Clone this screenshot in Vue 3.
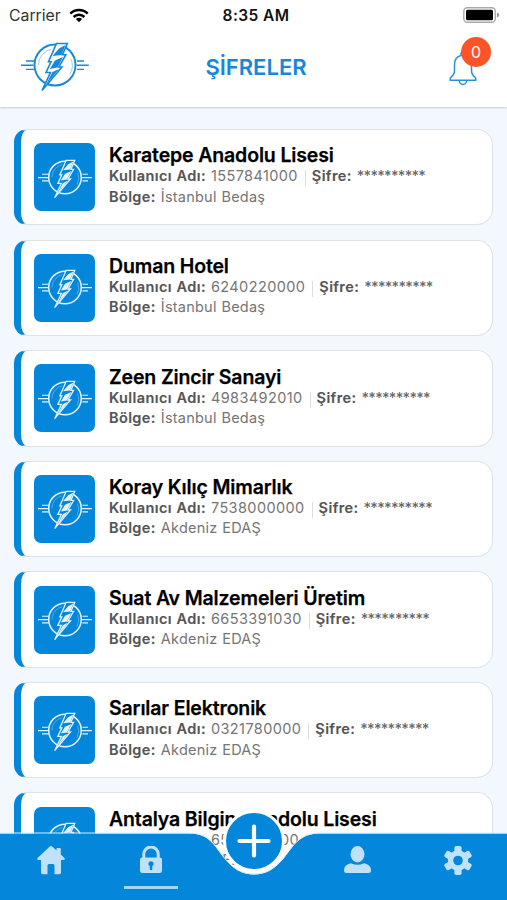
<template>
  <div class="screen">
    <svg class="defs" width="0" height="0">
      <symbol id="bolt-logo" viewBox="21 42 68 50">
        <g fill="none" stroke="currentColor">
          <circle cx="55" cy="65" r="20.500" stroke-width="1.900" />
          <path d="M38.500 65a16.500 16.500 0 0 1 13-16M71 59a17 17 0 0 1-1 15" stroke-width=".7" opacity=".6" />
          <path d="M26 61h8M21 65.200h12.500M26 69.400h8M77 61h7M76.500 65.200h12.300M77 69.400h7" stroke-width="1.400" />
        </g>
        <path class="bolt-back" d="M56.500 43.500H67.300L62.500 54.800H65.800L58.800 67H62L42 90.500L50.500 72.500H46L51 61.800H48.500Z" stroke="currentColor" stroke-width="1.600" />
        <path d="M59 48.500L65.500 45L61.500 55L52.500 56ZM55 60.500L63 57L57.500 67.500L49.800 69ZM52.500 72L59 69L45.500 85.500Z" fill="currentColor" />
      </symbol>
    </svg>

    <div class="status-bar">
      <div class="carrier">
        <span>Carrier</span>
        <svg width="20" height="15" viewBox="0 0 20 15">
          <g fill="none" stroke="#000" stroke-width="2.500">
            <path d="M1.300 5.600a12.300 12.300 0 0 1 17.400 0" />
            <path d="M4.600 9a7.600 7.600 0 0 1 10.800 0" />
          </g>
          <path d="M10 14.200L6.900 11.100a4.400 4.400 0 0 1 6.200 0Z" />
        </svg>
      </div>
      <div class="clock">8:35 AM</div>
      <svg class="battery" width="37" height="16" viewBox="0 0 37 16">
        <rect x=".8" y=".8" width="31.500" height="14.400" rx="3.500" fill="#fff" stroke="#aaa" stroke-width="1.400" />
        <rect x="3" y="2.800" width="27" height="10.400" rx="1.500" />
        <path d="M34 5.500q2.300.6 2.300 2.500t-2.300 2.500Z" fill="#999" />
      </svg>
    </div>

    <header class="header">
      <svg class="logo"><use href="#bolt-logo" /></svg>
      <h1>ŞİFRELER</h1>
      <div class="bell">
        <svg width="28" height="35" viewBox="0 0 28 35" fill="none" stroke="#2590dc" stroke-width="1.500">
          <path d="M12 4.500V3a2 2 0 0 1 4 0V4.500C21 5.500 22.500 9.500 22.500 14V20Q22.500 23.500 26.700 27V29.300H1.300V27Q5.500 23.500 5.500 20V14C5.500 9.500 7 5.500 12 4.500Z" />
          <path d="M10.300 29.500a3.700 4 0 0 0 7.400 0" />
        </svg>
        <span class="badge">0</span>
      </div>
    </header>

    <main class="list">
      <article v-for="item in items" :key="item.user" class="card">
        <div class="tile">
          <svg><use href="#bolt-logo" /></svg>
        </div>
        <div class="info">
          <h2>{{ item.name }}</h2>
          <p>
            <b>Kullanıcı Adı:</b> {{ item.user }}
            <span class="divider"></span>
            <b>Şifre:</b> <span class="stars">**********</span>
          </p>
          <p><b>Bölge:</b> <span class="region">{{ item.region }}</span></p>
        </div>
      </article>
    </main>

    <nav class="tab-bar">
      <svg class="tab-shape" width="507" height="68" viewBox="0 0 507 68">
        <path d="M0 1.500H189C209 1.500 214 13 224 26C233 37 242 42.500 254 42.500S275 37 284 26C294 13 300 1.500 320 1.500H507V68H0Z" fill="#0486db" />
        <path d="M0 1H189C209 1 214 12.500 224 25.500C233 36.500 242 42 254 42S275 36.500 284 25.500C294 12.500 300 1 320 1H507" fill="none" stroke="#d5edfc" />
      </svg>
      <div class="tabs">
        <a class="tab">
          <svg width="28" height="29" viewBox="0 0 28 29">
            <path d="M12.800.6q1.200-1 2.400 0L19.500 4.600V2.800q0-.9.900-.9h2.500q.9 0 .9.900V8.600L27.400 12q1 1.200-.4 2H24V26.500q0 1.800-1.800 1.800H17.500V19.500q0-1.500-1.500-1.500H12q-1.500 0-1.500 1.500V28.300H5.800Q4 28.300 4 26.500V14H1Q-.4 13.200.6 12Z" />
          </svg>
        </a>
        <a class="tab active">
          <svg width="22" height="27" viewBox="0 0 22 27">
            <path d="M3.800 12V8A7.200 7 0 0 1 18.200 8V12" fill="none" stroke="#bfe2fa" stroke-width="3" />
            <path fill-rule="evenodd" d="M2 11.500H20q2 0 2 2V24.500q0 2.500-2.500 2.500H2.500Q0 27 0 24.500V13.500q0-2 2-2ZM11 15.200a2.600 2.600 0 0 0-1.300 4.900V23q0 1.200 1.300 1.200T12.300 23V20.100A2.600 2.600 0 0 0 11 15.200Z" />
          </svg>
        </a>
        <div class="gap"></div>
        <a class="tab">
          <svg width="27" height="27" viewBox="0 0 27 27">
            <ellipse cx="13.500" cy="8.200" rx="7" ry="8.200" />
            <path d="M0 24.500Q0 18.500 7 17.200Q13.500 20.500 20 17.200Q27 18.500 27 24.500Q27 27 24.500 27H2.500Q0 27 0 24.500Z" />
          </svg>
        </a>
        <a class="tab">
          <svg width="28" height="29" viewBox="-14 -14.500 28 29">
            <circle r="7.500" fill="none" stroke="#bfe2fa" stroke-width="5.400" />
            <rect v-for="n in 6" :key="n" x="-3.600" y="-14.500" width="7.200" height="7.500" rx="1.800" :transform="`rotate(${n * 60})`" />
          </svg>
        </a>
      </div>
      <button class="add">
        <svg width="34" height="34" viewBox="0 0 34 34">
          <path d="M17 2.500V31.500M2.500 17H31.500" stroke="#fff" stroke-width="4.200" stroke-linecap="round" />
        </svg>
      </button>
    </nav>
  </div>
</template>

<script setup>
import { ref } from 'vue'

const items = ref([
  { name: 'Karatepe Anadolu Lisesi', user: '1557841000', region: 'İstanbul Bedaş' },
  { name: 'Duman Hotel', user: '6240220000', region: 'İstanbul Bedaş' },
  { name: 'Zeen Zincir Sanayi', user: '4983492010', region: 'İstanbul Bedaş' },
  { name: 'Koray Kılıç Mimarlık', user: '7538000000', region: 'Akdeniz EDAŞ' },
  { name: 'Suat Av Malzemeleri Üretim', user: '6653391030', region: 'Akdeniz EDAŞ' },
  { name: 'Sarılar Elektronik', user: '0321780000', region: 'Akdeniz EDAŞ' },
  { name: 'Antalya Bilgin Anadolu Lisesi', user: '6541120000', region: 'Akdeniz EDAŞ' }
])
</script>

<style>
body {
  margin: 0;
}
</style>

<style scoped>
.screen {
  position: relative;
  display: flex;
  flex-direction: column;
  width: 507px;
  height: 900px;
  overflow: hidden;
  background: #f3f8fe;
  font-family: Inter, "Liberation Sans", sans-serif;
}

.defs {
  position: absolute;
}

.status-bar {
  display: grid;
  grid-template-columns: 1fr auto 1fr;
  align-items: center;
  flex: none;
  height: 30px;
  padding: 0 7px 0 9px;
  background: #fff;
  font-size: 15.8px;
  color: #111;
}

.carrier {
  display: flex;
  align-items: center;
  gap: 8px;
  color: #333;
}

.clock {
  margin-left: 3px;
  font-weight: 600;
  font-size: 15.5px;
  letter-spacing: 0.4px;
}

.battery {
  justify-self: end;
}

.header {
  display: grid;
  grid-template-columns: 1fr auto 1fr;
  align-items: center;
  box-sizing: border-box;
  flex: none;
  height: 77px;
  padding: 0 16px 0 21px;
  background: #fff;
  box-shadow: 0 1px 2px rgba(0, 0, 0, 0.18);
}

.logo {
  width: 68px;
  height: 50px;
  margin-top: -3px;
  color: #1687d9;
  --bolt-fill: #fff;
}

.bolt-back {
  fill: var(--bolt-fill);
}

h1 {
  margin: -3px 0 0;
  font-size: 22px;
  font-weight: 600;
  line-height: 26px;
  color: #1687d9;
}

.bell {
  position: relative;
  justify-self: end;
  width: 42px;
  height: 50px;
  margin-top: -14px;
}

.bell > svg {
  margin-top: 14px;
}

.badge {
  position: absolute;
  top: 0;
  right: 0;
  width: 30px;
  height: 30px;
  border-radius: 50%;
  background: #fd5329;
  color: #fff;
  font-size: 16px;
  line-height: 30px;
  text-align: center;
}

.list {
  display: flex;
  flex-direction: column;
  gap: 14.2px;
  flex: 1;
  min-height: 0;
  padding: 22px 14px 0;
  overflow: hidden;
}

.card {
  display: flex;
  align-items: center;
  gap: 13.6px;
  flex: none;
  box-sizing: border-box;
  height: 96.4px;
  padding: 0 12px 0 13.4px;
  border: 1px solid #dfe2e5;
  border-left: 7px solid #0486db;
  border-radius: 13px 16px 16px 13px;
  background: #fff;
}

.tile {
  display: flex;
  align-items: center;
  justify-content: center;
  flex: none;
  width: 61px;
  height: 68px;
  border-radius: 7px;
  background: #0486db;
  color: #e3f4ff;
  --bolt-fill: #0486db;
}

.tile svg {
  width: 54px;
  height: 40px;
  margin-top: 3px;
}

.info {
  margin-top: -3px;
  white-space: nowrap;
  color: #757575;
}

h2 {
  margin: 0;
  font-size: 19.5px;
  font-weight: 600;
  letter-spacing: -0.14px;
  line-height: 22px;
  color: #000;
  -webkit-text-stroke: 0.25px #000;
}

p {
  margin: 0;
  font-size: 14.5px;
  letter-spacing: 0.4px;
  word-spacing: 0.5px;
  line-height: 20.2px;
}

b {
  font-weight: 600;
  color: #555;
  -webkit-text-stroke: 0.15px #555;
}

.region {
  letter-spacing: 0.22px;
}

.stars {
  font-weight: 500;
  letter-spacing: -0.7px;
  color: #666;
}

.divider {
  display: inline-block;
  width: 1px;
  height: 16px;
  margin: 0 3px 0 2px;
  vertical-align: -5px;
  background: #ddd;
}

.divider + b {
  margin-left: 3px;
}

.tab-bar {
  position: absolute;
  left: 0;
  bottom: 0;
  width: 507px;
  height: 68px;
}

.tab-shape {
  position: absolute;
  top: 0;
  left: 0;
}

.tabs {
  position: relative;
  display: grid;
  grid-template-columns: 101px 99px 107px 101px 99px;
  height: 100%;
}

.tab {
  display: flex;
  flex-direction: column;
  align-items: center;
  box-sizing: border-box;
  padding-top: 14px;
  fill: #bfe2fa;
}

.active {
  justify-content: space-between;
  padding-bottom: 11px;
}

.active::after {
  content: '';
  width: 54px;
  height: 3px;
  background: #a5d6f7;
}

.add {
  position: absolute;
  top: -22px;
  left: 223px;
  display: flex;
  align-items: center;
  justify-content: center;
  width: 62px;
  height: 62px;
  padding: 0;
  border: 3px solid #fff;
  border-radius: 50%;
  background: #0486db;
}
</style>
